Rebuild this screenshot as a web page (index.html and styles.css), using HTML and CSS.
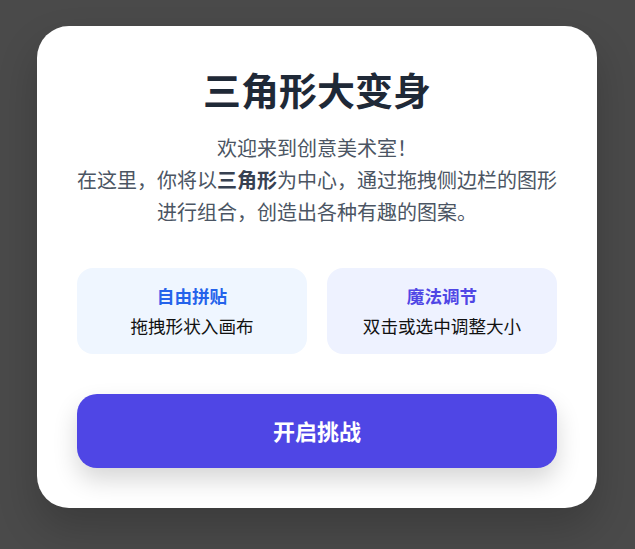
FILE: index.html
```html
<!DOCTYPE html>
<html lang="zh-CN">
<head>
  <meta charset="UTF-8" />
  <meta name="viewport" content="width=device-width, initial-scale=1.0">
  <title>三角形大变身</title>
  <link rel="stylesheet" href="styles.css">
</head>
<body>
  <div class="intro-card">
    <h1 class="intro-title">三角形大变身</h1>
    <p class="intro-text">
      欢迎来到创意美术室！<br>
      在这里，你将以<b>三角形</b>为中心，通过拖拽侧边栏的图形进行组合，创造出各种有趣的图案。
    </p>

    <div class="tips">
      <div class="tip tip-blue">
        <div class="tip-title">自由拼贴</div>
        <div class="tip-desc">拖拽形状入画布</div>
      </div>
      <div class="tip tip-indigo">
        <div class="tip-title">魔法调节</div>
        <div class="tip-desc">双击或选中调整大小</div>
      </div>
    </div>

    <button class="start-btn">开启挑战</button>
  </div>
</body>
</html>
```

FILE: styles.css
```css
* { box-sizing:border-box; }
body { margin:0; min-height:100vh; background:#4a4a4a; font-family:'Noto Sans CJK SC', 'Noto Sans', sans-serif; display:flex; justify-content:flex-start; align-items:flex-start; padding:26px 0 0 37px; }
.intro-card { width:560px; background:#fff; border-radius:32px; padding:40px; text-align:center; box-shadow:0 20px 40px rgba(0,0,0,.2); }
.intro-title { margin:0 0 20px; font-size:38px; line-height:46px; font-weight:700; color:#1f2937; }
.intro-text { margin:0; font-size:20px; line-height:32px; color:#4b5563; }
.intro-text b { color:#374151; }
.tips { display:grid; grid-template-columns:1fr 1fr; gap:20px; margin-top:40px; }
.tip { border-radius:16px; padding:16px 10px; }
.tip-blue { background:#eff6ff; }
.tip-indigo { background:#eef2ff; }
.tip-title { font-size:17.6px; line-height:24px; font-weight:700; margin-bottom:6px; }
.tip-blue .tip-title { color:#2563eb; }
.tip-indigo .tip-title { color:#4f46e5; }
.tip-desc { font-size:17.6px; line-height:24px; color:#111; }
.start-btn { display:block; width:100%; margin-top:40px; height:74px; padding-bottom:4px; border:none; border-radius:20px; background:#4f46e5; color:#fff; font-family:inherit; font-size:22px; font-weight:700; cursor:pointer; box-shadow:0 12px 24px rgba(0,0,0,.16); }
```
